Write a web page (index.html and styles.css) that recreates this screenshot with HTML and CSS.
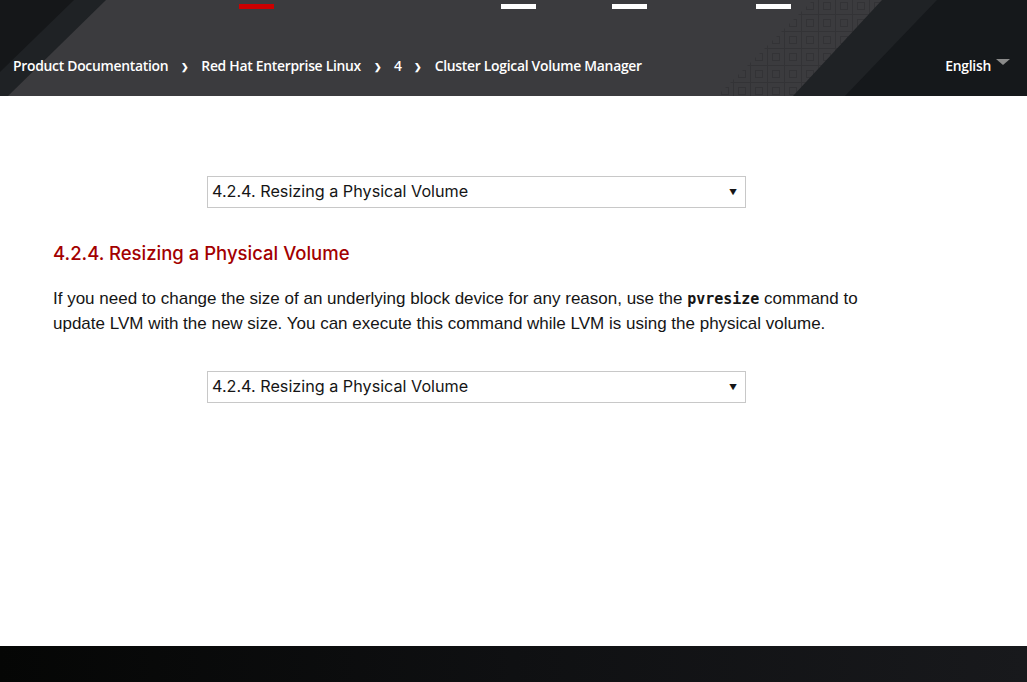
FILE: index.html
```html
<!DOCTYPE html>
<html lang="en">
<head>
<meta charset="utf-8">
<title>Resizing a Physical Volume</title>
<link rel="stylesheet" href="styles.css">
</head>
<body>
<header class="masthead">
  <svg class="masthead-bg" width="1027" height="96" viewBox="0 0 1027 96" aria-hidden="true">
    <defs>
      <pattern id="grid" width="17" height="17" patternUnits="userSpaceOnUse" x="2" y="-3">
        <path d="M0 0.5H17M0.5 0V17" stroke="#333336" stroke-width="1" fill="none"/>
        <rect x="5.5" y="5.5" width="7" height="7" fill="none" stroke="#333336" stroke-width="1"/>
      </pattern>
    </defs>
    <polygon points="0,0 106,0 8,96 0,96" fill="#1f2225"/>
    <polygon points="0,0 74,0 0,72" fill="#151719"/>
    <polygon points="813,0 1027,0 1027,96 717,96" fill="url(#grid)"/>
    <polygon points="882,0 1027,0 1027,96 793,96" fill="#1f2225"/>
    <polygon points="937,0 1027,0 1027,96 845,96" fill="#15181b"/>
  </svg>
  <div class="nav-marks">
    <span class="mark mark-red"></span>
    <span class="mark mark-1"></span>
    <span class="mark mark-2"></span>
    <span class="mark mark-3"></span>
  </div>
  <div class="crumb-row">
    <nav class="crumbs">
      <a href="#">Product Documentation</a>
      <span class="sep">❯</span>
      <a href="#">Red Hat Enterprise Linux</a>
      <span class="sep">❯</span>
      <a href="#">4</a>
      <span class="sep">❯</span>
      <a href="#">Cluster Logical Volume Manager</a>
    </nav>
    <div class="lang">English <span class="caret"></span></div>
  </div>
</header>

<main class="content">
  <div class="chapter-select">
    <span>4.2.4. Resizing a Physical Volume</span>
    <span class="arrow">▼</span>
  </div>
  <h2 class="title">4.2.4. Resizing a Physical Volume</h2>
  <p class="para">If you need to change the size of an underlying block device for any reason, use the <code>pvresize</code> command to update LVM with the new size. You can execute this command while LVM is using the physical volume.</p>
  <div class="chapter-select lower">
    <span>4.2.4. Resizing a Physical Volume</span>
    <span class="arrow">▼</span>
  </div>
</main>

<footer class="footer"></footer>
</body>
</html>
```
FILE: styles.css
```css
* { box-sizing: border-box; }
html, body { margin: 0; padding: 0; }
body {
  width: 1027px;
  height: 682px;
  overflow: hidden;
  background: #fff;
  display: flex;
  flex-direction: column;
  font-family: "Liberation Sans", Arial, sans-serif;
}

.masthead {
  position: relative;
  height: 96px;
  background: #3b3b3e;
  flex: none;
}
.masthead-bg {
  position: absolute;
  left: 0;
  top: 0;
  display: block;
}
.nav-marks {
  position: relative;
  display: flex;
  height: 9px;
  padding-top: 4px;
}
.mark {
  display: block;
  width: 35px;
  height: 5px;
  background: #fff;
}
.mark-red { background: #cc0000; margin-left: 239px; }
.mark-1 { margin-left: 227px; }
.mark-2 { margin-left: 76px; }
.mark-3 { margin-left: 109px; }

.crumb-row {
  position: relative;
  display: flex;
  align-items: center;
  justify-content: space-between;
  padding: 0 17px 0 13px;
  margin-top: 46px;
  height: 20px;
  font-family: "Open Sans", sans-serif;
  font-weight: 600;
  font-size: 13.9px;
  color: #fff;
}
.crumbs { display: flex; align-items: center; }
.crumbs a { color: #fff; text-decoration: none; letter-spacing: -0.28px; }
.sep {
  font-size: 9px;
  margin: 0 12.5px;
  color: #fff;
  position: relative;
  top: 1px;
}
.lang { display: flex; align-items: center; letter-spacing: -0.25px; }
.caret {
  width: 0;
  height: 0;
  border-left: 7px solid transparent;
  border-right: 7px solid transparent;
  border-top: 6px solid #8a8a8a;
  margin-left: 5px;
  position: relative;
  top: -3px;
}

.content {
  flex: 1;
  padding: 80px 0 0 53px;
}
.chapter-select {
  width: 539px;
  height: 32px;
  margin-left: 154px;
  border: 1px solid #c8c8c8;
  display: flex;
  align-items: center;
  justify-content: space-between;
  padding: 0 8px 0 4px;
  font-family: "Inter", sans-serif;
  font-size: 16.2px;
  color: #151515;
}
.chapter-select span:first-child { position: relative; top: -1px; }
.chapter-select .arrow { font-size: 8px; color: #151515; }
.chapter-select.lower { margin-top: 35px; }

.title {
  margin: 33px 0 0 0;
  font-family: "Inter", sans-serif;
  font-size: 18.5px;
  font-weight: 500;
  color: #a30000;
  line-height: 24px;
}
.para {
  margin: 21px 0 0 0;
  width: 830px;
  font-size: 17px;
  line-height: 25px;
  color: #151515;
}
.para code {
  font-family: "DejaVu Sans Mono", monospace;
  font-weight: bold;
  font-size: 15px;
  line-height: 1;
}

.footer {
  flex: none;
  height: 36px;
  background: linear-gradient(90deg, #050605 0%, #0f1012 50%, #18191c 100%);
}
```
